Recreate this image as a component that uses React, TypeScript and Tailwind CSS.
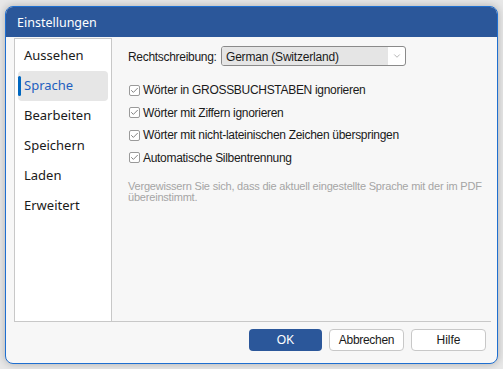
import { Check, ChevronDown } from 'lucide-react'

const navItems = ['Aussehen', 'Sprache', 'Bearbeiten', 'Speichern', 'Laden', 'Erweitert']

const options = [
  'Wörter in GROSSBUCHSTABEN ignorieren',
  'Wörter mit Ziffern ignorieren',
  'Wörter mit nicht-lateinischen Zeichen überspringen',
  'Automatische Silbentrennung',
]

const ui = { fontFamily: '"Noto Sans", "Open Sans", sans-serif' }
const arial = { fontFamily: '"Liberation Sans", Arial, sans-serif' }

export default function App() {
  return (
    <div className="w-[503px] h-[369px] bg-[#e8e8e8] pt-[6px] pl-[5px] overflow-hidden">
      <div className="w-[493px] h-[358px] rounded-[8px] overflow-hidden border border-[#1f6fd0] bg-[#f7f7f7] flex flex-col shadow-[0_0_8px_rgba(0,0,0,0.25)]">
        <div
          className="h-[30px] shrink-0 bg-[#2b579a] text-white text-[12.5px] pl-[11px] pt-[3px] flex items-center"
          style={ui}
        >
          Einstellungen
        </div>

        <div className="flex-1 flex flex-col pl-[8px] pr-[6px] pt-[1px]">
          <div className="h-[284px] flex border-b border-[#c8c8c8]">
            <div className="w-[98px] shrink-0 bg-white border-l border-t border-r border-[#c8c8c8] pt-[2px] px-[3px]" style={ui}>
              {navItems.map((item) => {
                const active = item === 'Sprache'
                return (
                  <div
                    key={item}
                    className={`relative h-[30px] flex items-center pl-[6px] text-[13px] rounded-[4px] ${
                      active ? 'bg-[#e6e6e6] text-[#1f5fbf]' : 'text-[#1a1a1a]'
                    }`}
                  >
                    {active && <span className="absolute left-0 top-[5px] w-[3px] h-[20px] rounded-full bg-[#0067c0]" />}
                    {item}
                  </div>
                )
              })}
            </div>

            <div className="flex-1 min-w-0 pl-[16px] pt-[8px]" style={arial}>
              <div className="flex items-center h-[20px]">
                <span className="text-[12px] text-[#1a1a1a] w-[93px] tracking-[-0.3px] pt-[2px]">Rechtschreibung:</span>
                <div className="w-[185px] h-[20px] border border-[#8a8a8a] rounded-[3px] bg-white flex items-center overflow-hidden">
                  <div className="flex-1 h-full bg-[#e5e5e5] flex items-center pl-[4px] text-[12px] text-[#1a1a1a] tracking-[-0.2px] pt-[1px]">
                    German (Switzerland)
                  </div>
                  <div className="w-[17px] h-full flex items-center justify-center">
                    <ChevronDown className="w-[10px] h-[10px] text-[#8a8a8a]" strokeWidth={1.5} />
                  </div>
                </div>
              </div>

              <div className="mt-[18px] flex flex-col gap-[10.5px] pl-[1px]">
                {options.map((o) => (
                  <div key={o} className="flex items-center h-[12px] gap-[3px]">
                    <div className="w-[11px] h-[11px] border border-[#9a9a9a] rounded-[2px] bg-white flex items-center justify-center">
                      <Check className="w-[9px] h-[9px] text-[#7a7a7a]" strokeWidth={2.5} />
                    </div>
                    <span className="text-[12px] text-[#1a1a1a] tracking-[-0.3px]">{o}</span>
                  </div>
                ))}
              </div>

              <p className="mt-[17px] text-[11px] leading-[11px] text-[#a5a5a5] tracking-[-0.2px] w-[368px]">
                Vergewissern Sie sich, dass die aktuell eingestellte Sprache mit der im PDF übereinstimmt.
              </p>
            </div>
          </div>

          <div className="flex justify-end gap-[7px] pt-[7px] pr-[5px]" style={arial}>
            <button className="w-[73px] h-[22px] rounded-[4px] bg-[#2b579a] text-white text-[12px]">OK</button>
            <button className="w-[75px] h-[22px] rounded-[4px] bg-white border border-[#c8c8c8] text-[#1a1a1a] text-[12px] tracking-[-0.3px]">
              Abbrechen
            </button>
            <button className="w-[75px] h-[22px] rounded-[4px] bg-white border border-[#c8c8c8] text-[#1a1a1a] text-[12px]">
              Hilfe
            </button>
          </div>
        </div>
      </div>
    </div>
  )
}
